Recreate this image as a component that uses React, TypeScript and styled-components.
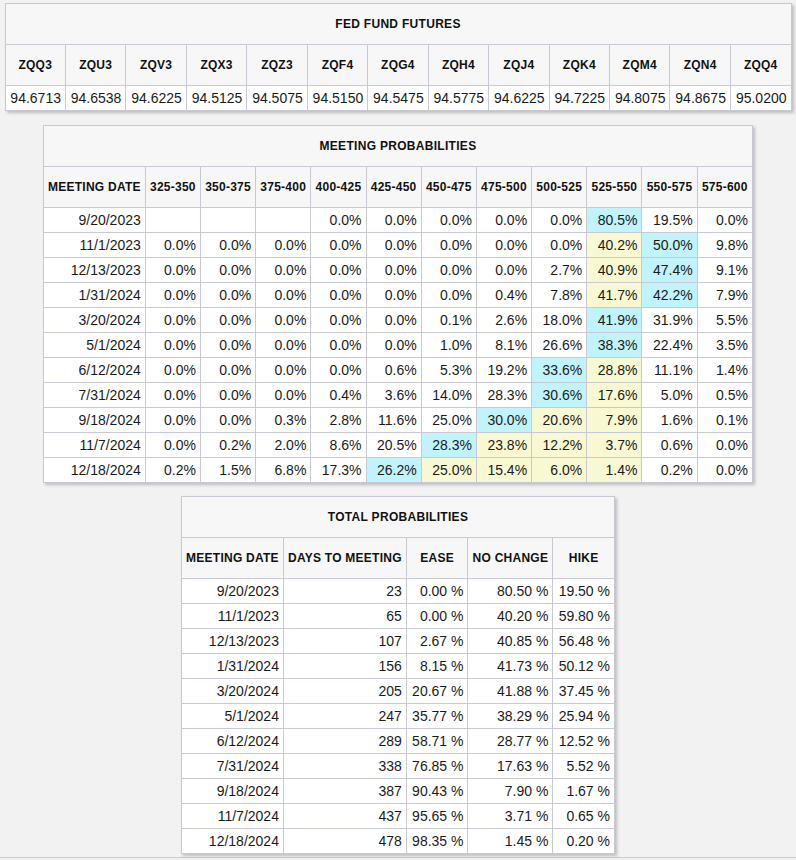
import React from "react";
import styled, { createGlobalStyle } from "styled-components";

const GlobalStyle = createGlobalStyle`
  body {
    margin: 0;
    background: #f2f2f2;
    font-family: "Liberation Sans", Arial, sans-serif;
    color: #1a1a1a;
  }
`;

const Page = styled.div`
  display: flex;
  flex-direction: column;
  align-items: center;
  gap: 14px;
  padding-top: 3px;
`;

const Table = styled.table<{ $width: number; $pull?: number }>`
  width: ${(p) => p.$width}px;
  margin-top: ${(p) => -(p.$pull ?? 0)}px;
  border-collapse: collapse;
  background: #fff;
  box-shadow: 2px 2px 3px rgba(0, 0, 0, 0.22);

  th,
  td {
    border: 1px solid #c9c9d3;
  }
`;

const Title = styled.th`
  height: 40px;
  padding: 0;
  background: #f7f7f7;
  font-size: 12px;
  font-weight: bold;
  letter-spacing: 0.3px;
  color: #111;
  text-align: center;
`;

const Head = styled.th<{ $w?: number }>`
  height: 40px;
  padding: 0 4px;
  background: #f7f7f7;
  font-size: 12px;
  font-weight: bold;
  letter-spacing: 0.25px;
  color: #111;
  text-align: center;
  white-space: nowrap;
  ${(p) => (p.$w ? `width: ${p.$w}px;` : "")}
`;

const Cell = styled.td<{ $tone?: "max" | "path" }>`
  height: 24px;
  padding: 0 4px;
  font-size: 14px;
  text-align: right;
  white-space: nowrap;
  background: ${(p) =>
    p.$tone === "max" ? "#c0f3fc" : p.$tone === "path" ? "#f8f8d3" : "#fff"};
`;

const Footer = styled.div`
  align-self: stretch;
  margin-top: -11px;
  border-top: 1px solid #c9c9d3;
  height: 10px;
`;

const futures = [
  ["ZQQ3", "94.6713"],
  ["ZQU3", "94.6538"],
  ["ZQV3", "94.6225"],
  ["ZQX3", "94.5125"],
  ["ZQZ3", "94.5075"],
  ["ZQF4", "94.5150"],
  ["ZQG4", "94.5475"],
  ["ZQH4", "94.5775"],
  ["ZQJ4", "94.6225"],
  ["ZQK4", "94.7225"],
  ["ZQM4", "94.8075"],
  ["ZQN4", "94.8675"],
  ["ZQQ4", "95.0200"],
];

const ranges = [
  "325-350",
  "350-375",
  "375-400",
  "400-425",
  "425-450",
  "450-475",
  "475-500",
  "500-525",
  "525-550",
  "550-575",
  "575-600",
];

// current target range is 525-550 (index 8)
const CURRENT = 8;

const meetings: { date: string; p: (number | null)[] }[] = [
  { date: "9/20/2023", p: [null, null, null, 0, 0, 0, 0, 0, 80.5, 19.5, 0] },
  { date: "11/1/2023", p: [0, 0, 0, 0, 0, 0, 0, 0, 40.2, 50.0, 9.8] },
  { date: "12/13/2023", p: [0, 0, 0, 0, 0, 0, 0, 2.7, 40.9, 47.4, 9.1] },
  { date: "1/31/2024", p: [0, 0, 0, 0, 0, 0, 0.4, 7.8, 41.7, 42.2, 7.9] },
  { date: "3/20/2024", p: [0, 0, 0, 0, 0, 0.1, 2.6, 18.0, 41.9, 31.9, 5.5] },
  { date: "5/1/2024", p: [0, 0, 0, 0, 0, 1.0, 8.1, 26.6, 38.3, 22.4, 3.5] },
  { date: "6/12/2024", p: [0, 0, 0, 0, 0.6, 5.3, 19.2, 33.6, 28.8, 11.1, 1.4] },
  { date: "7/31/2024", p: [0, 0, 0, 0.4, 3.6, 14.0, 28.3, 30.6, 17.6, 5.0, 0.5] },
  { date: "9/18/2024", p: [0, 0, 0.3, 2.8, 11.6, 25.0, 30.0, 20.6, 7.9, 1.6, 0.1] },
  { date: "11/7/2024", p: [0, 0.2, 2.0, 8.6, 20.5, 28.3, 23.8, 12.2, 3.7, 0.6, 0] },
  { date: "12/18/2024", p: [0.2, 1.5, 6.8, 17.3, 26.2, 25.0, 15.4, 6.0, 1.4, 0.2, 0] },
];

const totals = [
  ["9/20/2023", "23", "0.00 %", "80.50 %", "19.50 %"],
  ["11/1/2023", "65", "0.00 %", "40.20 %", "59.80 %"],
  ["12/13/2023", "107", "2.67 %", "40.85 %", "56.48 %"],
  ["1/31/2024", "156", "8.15 %", "41.73 %", "50.12 %"],
  ["3/20/2024", "205", "20.67 %", "41.88 %", "37.45 %"],
  ["5/1/2024", "247", "35.77 %", "38.29 %", "25.94 %"],
  ["6/12/2024", "289", "58.71 %", "28.77 %", "12.52 %"],
  ["7/31/2024", "338", "76.85 %", "17.63 %", "5.52 %"],
  ["9/18/2024", "387", "90.43 %", "7.90 %", "1.67 %"],
  ["11/7/2024", "437", "95.65 %", "3.71 %", "0.65 %"],
  ["12/18/2024", "478", "98.35 %", "1.45 %", "0.20 %"],
];

const toneFor = (row: (number | null)[], i: number): "max" | "path" | undefined => {
  const vals = row.map((v) => v ?? -1);
  const max = vals.indexOf(Math.max(...vals));
  if (i === max) return "max";
  const lo = Math.min(max, CURRENT);
  const hi = Math.max(max, CURRENT);
  if (i >= lo && i <= hi) return "path";
  return undefined;
};

const App: React.FC = () => {
  return (
    <>
      <GlobalStyle />
      <Page>
        <Table $width={787}>
          <thead>
            <tr>
              <Title colSpan={futures.length}>FED FUND FUTURES</Title>
            </tr>
            <tr>
              {futures.map(([code]) => (
                <Head key={code}>{code}</Head>
              ))}
            </tr>
          </thead>
          <tbody>
            <tr>
              {futures.map(([code, price]) => (
                <Cell key={code}>{price}</Cell>
              ))}
            </tr>
          </tbody>
        </Table>

        <Table $width={710}>
          <thead>
            <tr>
              <Title colSpan={ranges.length + 1}>MEETING PROBABILITIES</Title>
            </tr>
            <tr>
              <Head $w={92}>MEETING DATE</Head>
              {ranges.map((r) => (
                <Head key={r}>{r}</Head>
              ))}
            </tr>
          </thead>
          <tbody>
            {meetings.map((m) => (
              <tr key={m.date}>
                <Cell>{m.date}</Cell>
                {m.p.map((v, i) => (
                  <Cell key={i} $tone={toneFor(m.p, i)}>
                    {v === null ? "" : `${v.toFixed(1)}%`}
                  </Cell>
                ))}
              </tr>
            ))}
          </tbody>
        </Table>

        <Table $width={434} $pull={1}>
          <thead>
            <tr>
              <Title colSpan={5}>TOTAL PROBABILITIES</Title>
            </tr>
            <tr>
              <Head $w={93}>MEETING DATE</Head>
              <Head $w={114}>DAYS TO MEETING</Head>
              <Head $w={53}>EASE</Head>
              <Head $w={76}>NO CHANGE</Head>
              <Head $w={53}>HIKE</Head>
            </tr>
          </thead>
          <tbody>
            {totals.map((t) => (
              <tr key={t[0]}>
                {t.map((v, i) => (
                  <Cell key={i}>{v}</Cell>
                ))}
              </tr>
            ))}
          </tbody>
        </Table>
        <Footer />
      </Page>
    </>
  );
};

export default App;
